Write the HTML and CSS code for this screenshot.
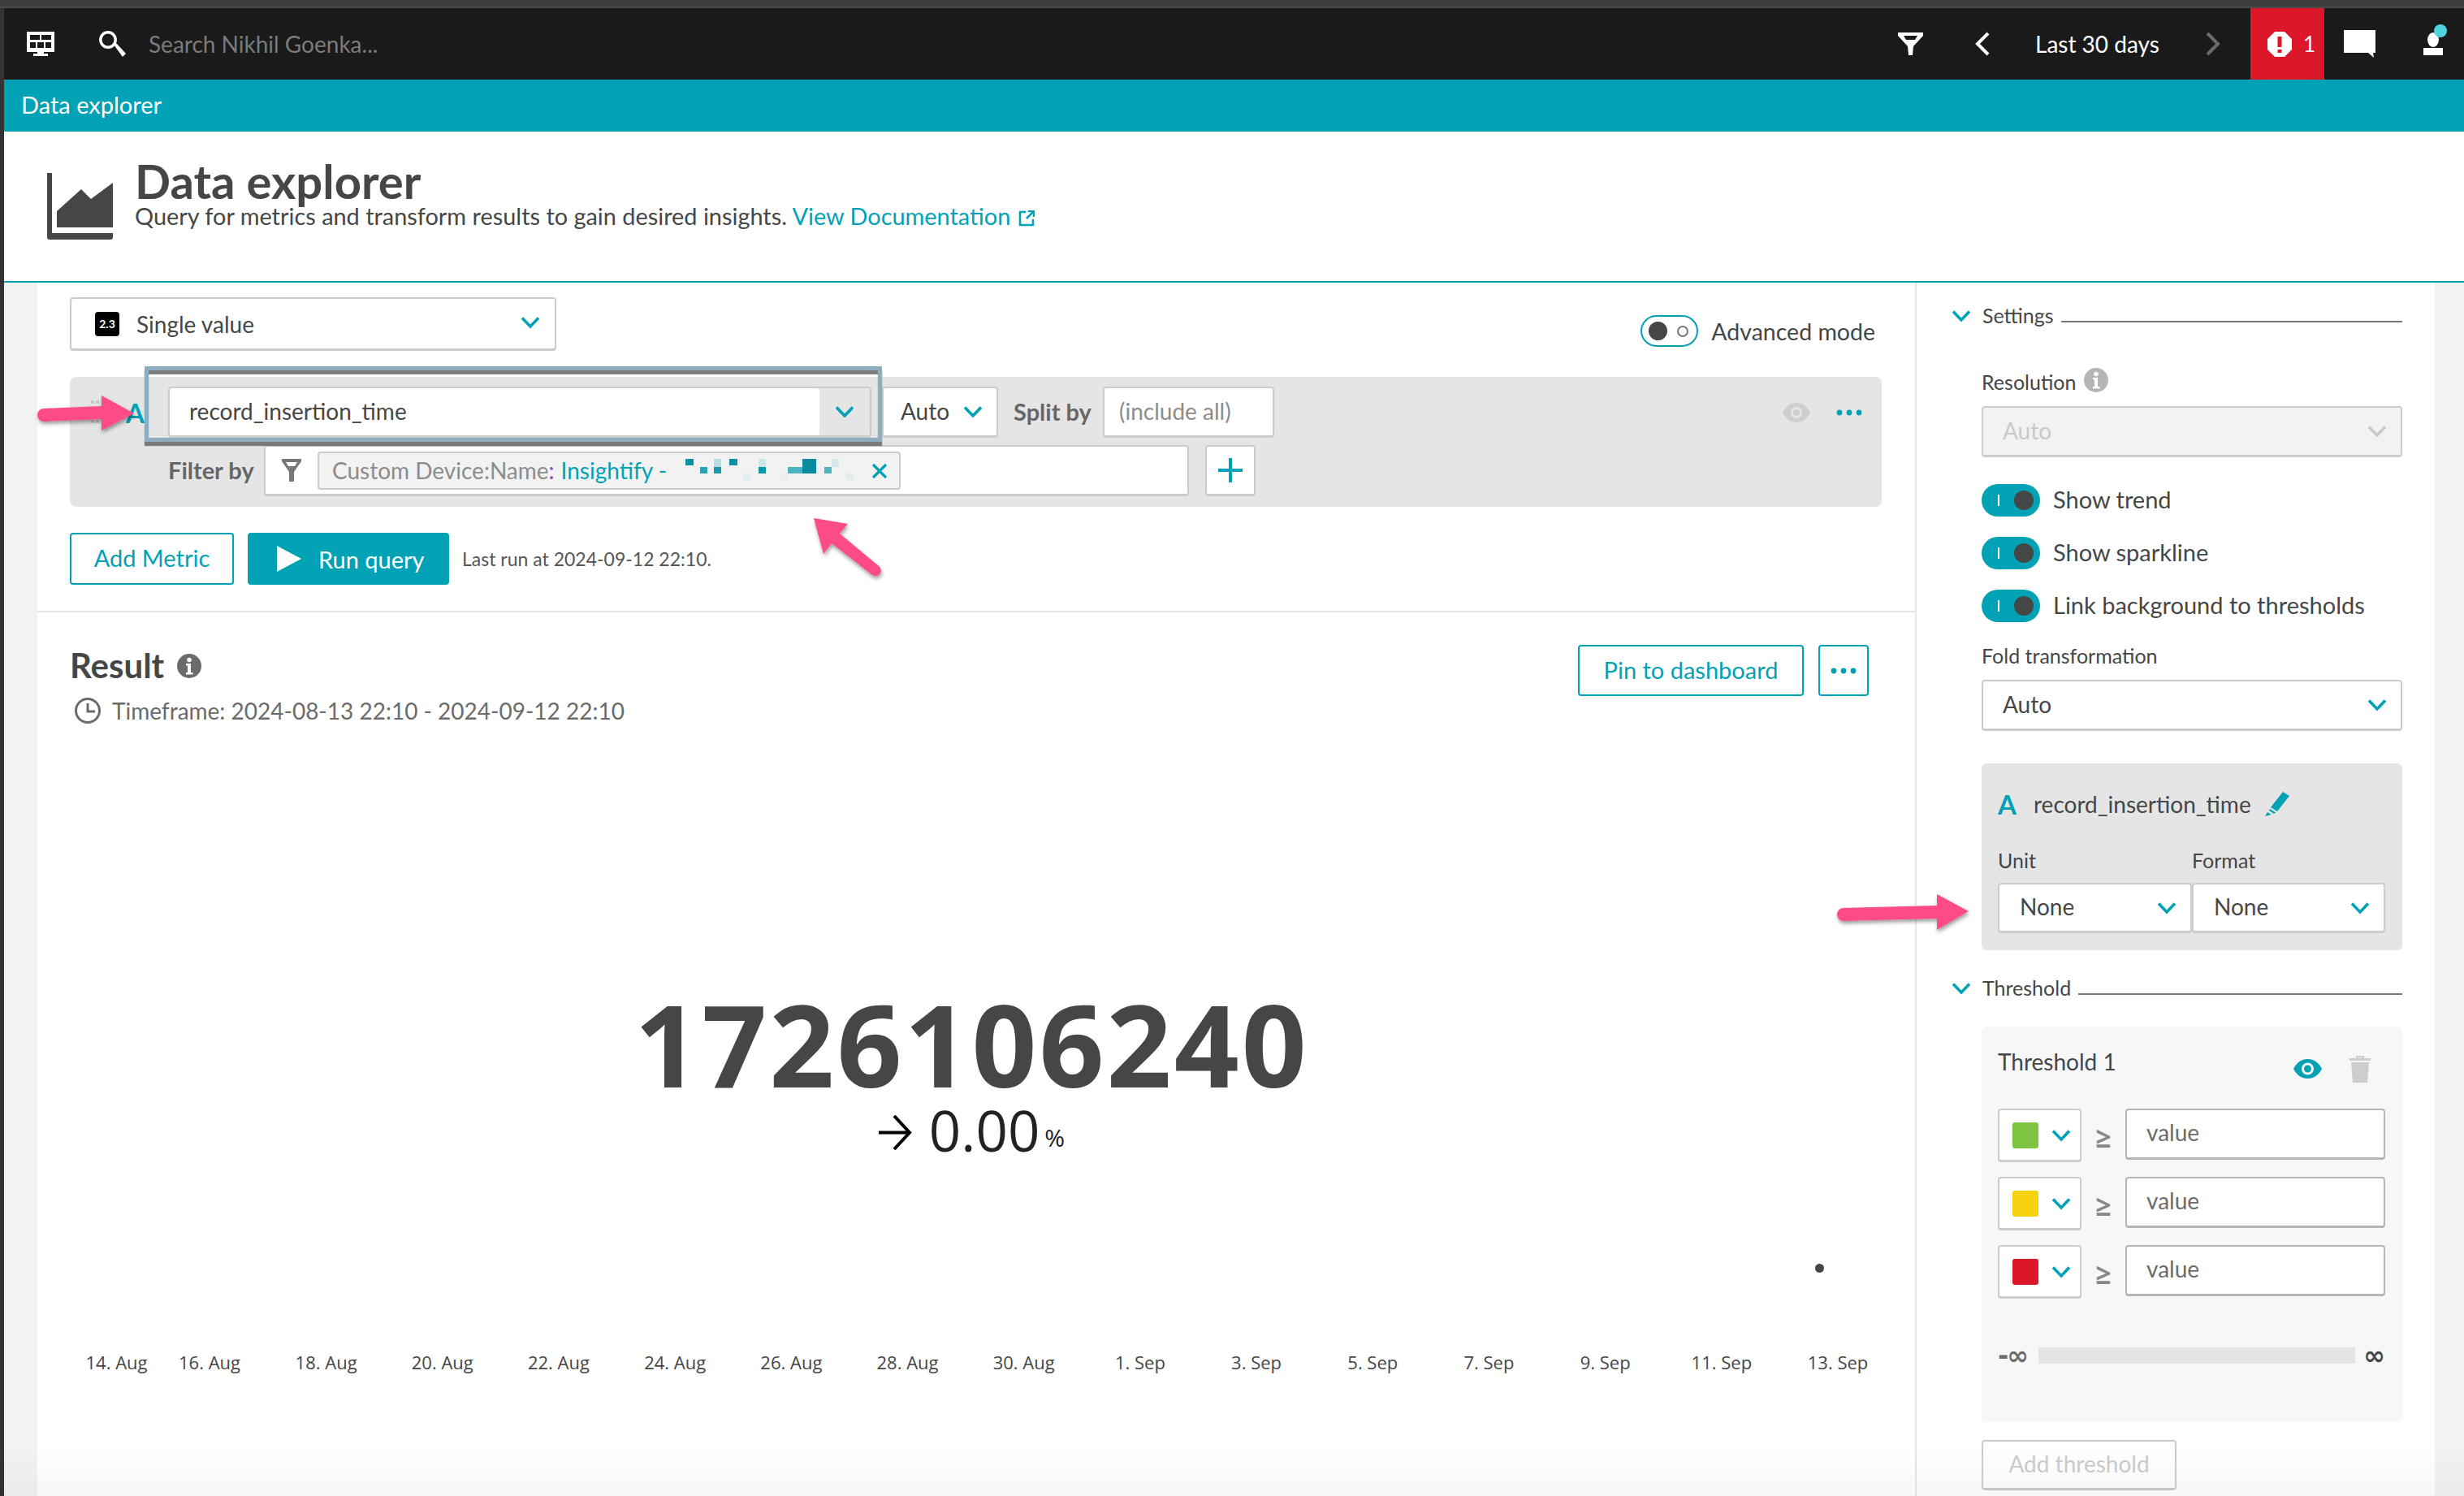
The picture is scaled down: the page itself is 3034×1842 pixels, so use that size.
FILE: index.html
```html
<!DOCTYPE html>
<html lang="en">
<head>
<meta charset="utf-8">
<title>Data explorer</title>
<link rel="stylesheet" href="styles.css">
</head>
<body>
<svg class="defs" aria-hidden="true">
  <symbol id="chev" viewBox="0 0 24 16"><path d="M2 2.500 12 13 22 2.500" fill="none" stroke="currentColor" stroke-width="3.600"/></symbol>
  <symbol id="dots" viewBox="0 0 32 8"><circle cx="4" cy="4" r="3.400" fill="currentColor"/><circle cx="16" cy="4" r="3.400" fill="currentColor"/><circle cx="28" cy="4" r="3.400" fill="currentColor"/></symbol>
  <symbol id="info" viewBox="0 0 30 30"><circle cx="15" cy="15" r="15" fill="currentColor"/><circle cx="15" cy="7.500" r="2.800" fill="#fff"/><path d="M11 12h6v11h2.500v2.500h-8.500V23H13v-8.500h-2z" fill="#fff"/></symbol>
</svg>
<div class="page">
  <div class="strip"></div>
  <div class="frame">
    <header class="topbar">
      <svg class="ic-monitor" viewBox="0 0 34 30"><path d="M0 0h34v25H21v2h5v3H8v-3h5v-2H0z" fill="#fff"/><path d="M4 4h12v6H4zM18 4h12v6H18zM4 13h7v7H4zM13 13h8v7h-8zM23 13h7v7h-7z" fill="#1a1a1a"/></svg>
      <svg class="ic-search" viewBox="0 0 34 32"><circle cx="11" cy="11" r="9.200" fill="none" stroke="#fff" stroke-width="3.400"/><path d="M18 17 21 15 33 28 29 32z" fill="#fff"/></svg>
      <span class="search-text">Search Nikhil Goenka...</span>
      <span class="grow"></span>
      <svg class="ic-funnel" viewBox="0 0 31 28"><path fill-rule="evenodd" d="M0 0h31v4L19 17l-1 11h-5l-1-11L0 4zM7 4l3 5h11l3-5z" fill="#fff"/></svg>
      <svg class="ic-nav ic-prev" viewBox="0 0 19 30"><path d="M17 2 4 15l13 13" fill="none" stroke="#fff" stroke-width="4"/></svg>
      <span class="range">Last 30 days</span>
      <svg class="ic-nav ic-next" viewBox="0 0 19 30"><path d="M2 2l13 13L2 28" fill="none" stroke="#6b6b6b" stroke-width="4"/></svg>
      <div class="alert">
        <svg class="ic-alert" viewBox="0 0 30 31"><path d="M9 0h12l9 9v13l-9 9H9l-9-9V9z" fill="#fff"/><path d="M12.500 6h5v13h-5zM12.500 22h5v4h-5z" fill="#dc172a"/></svg>
        <span>1</span>
      </div>
      <svg class="ic-comment" viewBox="0 0 39 34"><path d="M0 0h39v28h-3l1 6-7-6H0z" fill="#fff"/></svg>
      <svg class="ic-user" viewBox="0 0 32 38"><ellipse cx="14" cy="19" rx="7" ry="9" fill="#fff"/><path d="M2 29h24v13H2z" fill="#fff"/><circle cx="23" cy="8" r="8" fill="#4fd5e0"/></svg>
    </header>
    <div class="subbar">Data explorer</div>
    <section class="pagehead">
      <svg class="ic-chart" viewBox="0 0 81 82"><path d="M0 0h6v74h75v5a3 3 0 0 1-3 3H3a3 3 0 0 1-3-3z" fill="#454646"/><path d="M12 67V47l30-27 12 12L81 12v55z" fill="#454646"/></svg>
      <div class="pagehead-text">
        <h1>Data explorer</h1>
        <p>Query for metrics and transform results to gain desired insights. <a class="link">View Documentation</a><svg class="ic-ext" viewBox="0 0 20 20"><path d="M9 2H2v16h16v-7M12 1h7v7M19 1 10 10" fill="none" stroke="#02a2b6" stroke-width="2.500"/></svg></p>
      </div>
    </section>
    <div class="workspace">
      <div class="gutter"></div>
      <main class="main">
        <div class="row-type">
          <div class="box select select-type">
            <span class="type-badge">2.3</span>
            <span class="select-label">Single value</span>
            <svg class="chev"><use href="#chev"/></svg>
          </div>
          <div class="adv">
            <span class="adv-toggle"><i class="adv-knob"></i><i class="adv-ring"></i></span>
            <span>Advanced mode</span>
          </div>
        </div>

        <div class="query">
          <div class="query-row">
            <div class="grip"></div>
            <span class="letter">A</span>
            <div class="box metric">
              <span class="metric-value">record_insertion_time</span>
              <span class="metric-arrow"><svg class="chev"><use href="#chev"/></svg></span>
            </div>
            <div class="box select auto">
              <span>Auto</span>
              <svg class="chev"><use href="#chev"/></svg>
            </div>
            <span class="query-label split-label">Split by</span>
            <div class="box split"><span>(include all)</span></div>
            <span class="grow"></span>
            <svg class="ic-eye-off" viewBox="0 0 34 24"><path d="M0 12C4 4 10 0 17 0s13 4 17 12c-4 8-10 12-17 12S4 20 0 12z" fill="#cfcfcf"/><circle cx="17" cy="12" r="7" fill="#e5e5e5"/><circle cx="17" cy="12" r="4" fill="#cfcfcf"/></svg>
            <svg class="ic-dots"><use href="#dots"/></svg>
          </div>
          <div class="query-row filter-row">
            <span class="query-label filter-label">Filter by</span>
            <div class="box filter">
              <svg class="ic-filter" viewBox="0 0 24 28"><path fill-rule="evenodd" d="M0 0h24v3L15 16v12H9V16L0 3zM5 4l3 5h8l3-5z" fill="#777"/></svg>
              <div class="chip">
                <span class="chip-key">Custom Device:Name<b class="chip-colon">:</b></span>
                <span class="chip-val">Insightify -</span>
                <svg class="redact" viewBox="0 0 213 28">
                  <rect x="1" y="0" width="10" height="8" fill="#0d8fa3"/><rect x="19" y="10" width="9" height="8" fill="#2aa3b5"/><rect x="36" y="0" width="9" height="10" fill="#b5dde2"/><rect x="36" y="10" width="9" height="8" fill="#1b9aad"/><rect x="55" y="0" width="10" height="8" fill="#0d8fa3"/><rect x="72" y="18" width="9" height="8" fill="#dcecef"/><rect x="91" y="0" width="9" height="10" fill="#cfe6ea"/><rect x="91" y="10" width="9" height="8" fill="#0f95a9"/><rect x="118" y="18" width="9" height="8" fill="#e8eef0"/><rect x="127" y="10" width="18" height="8" fill="#4bb3c2"/><rect x="145" y="0" width="17" height="18" fill="#0b8ba0"/><rect x="172" y="10" width="9" height="8" fill="#4bb3c2"/><rect x="181" y="0" width="9" height="10" fill="#d5e8eb"/><rect x="199" y="18" width="9" height="8" fill="#e2ecee"/>
                </svg>
                <svg class="ic-x" viewBox="0 0 20 20"><path d="M2 2 18 18M18 2 2 18" stroke="#02a2b6" stroke-width="3.200"/></svg>
              </div>
            </div>
            <div class="box plus"><svg viewBox="0 0 30 30"><path d="M15 0v30M0 15h30" stroke="#02a2b6" stroke-width="4"/></svg></div>
          </div>
          <div class="focus-ring"></div>
        </div>

        <div class="actions">
          <button class="btn btn-outline btn-metric">Add Metric</button>
          <button class="btn btn-run"><svg viewBox="0 0 30 32"><path d="M0 0 30 16 0 32z" fill="#fff"/></svg>Run query</button>
          <span class="lastrun">Last run at 2024-09-12 22:10.</span>
        </div>

        <hr class="divider">

        <section class="result">
          <div class="result-head">
            <div>
              <h2>Result<svg class="ic-info-dark"><use href="#info"/></svg></h2>
              <div class="timeframe">
                <svg viewBox="0 0 32 32"><circle cx="16" cy="16" r="14.500" fill="none" stroke="#6b6b6b" stroke-width="3"/><path d="M16 7v10h9" fill="none" stroke="#6b6b6b" stroke-width="3"/></svg>
                <span>Timeframe: 2024-08-13 22:10 - 2024-09-12 22:10</span>
              </div>
            </div>
            <div class="result-actions">
              <button class="btn btn-outline btn-pin">Pin to dashboard</button>
              <button class="btn btn-outline btn-more"><svg class="ic-dots"><use href="#dots"/></svg></button>
            </div>
          </div>
          <div class="value">
            <div class="value-num">1726106240</div>
            <div class="value-trend">
              <svg viewBox="0 0 41 43"><path d="M0 21.500h36M19 1l19 20.500L19 42" fill="none" stroke="#000" stroke-width="4"/></svg>
              <span class="trend-num">0.00</span><span class="trend-pct">%</span>
            </div>
          </div>
          <i class="spark-dot"></i>
          <div class="ticks">
            <span>14. Aug</span><span>16. Aug</span><span>18. Aug</span><span>20. Aug</span><span>22. Aug</span><span>24. Aug</span><span>26. Aug</span><span>28. Aug</span><span>30. Aug</span><span>1. Sep</span><span>3. Sep</span><span>5. Sep</span><span>7. Sep</span><span>9. Sep</span><span>11. Sep</span><span>13. Sep</span>
          </div>
        </section>
      </main>

      <aside class="side">
        <div class="sec-head sec-settings"><svg class="chev"><use href="#chev"/></svg><span>Settings</span><i></i></div>
        <div class="field-label res-label">Resolution<svg class="ic-info"><use href="#info"/></svg></div>
        <div class="box select wide disabled"><span>Auto</span><svg class="chev"><use href="#chev"/></svg></div>
        <div class="toggles">
          <div class="toggle-row"><span class="toggle"><i class="toggle-bar"></i><i class="toggle-knob"></i></span><span class="toggle-text">Show trend</span></div>
          <div class="toggle-row"><span class="toggle"><i class="toggle-bar"></i><i class="toggle-knob"></i></span><span class="toggle-text">Show sparkline</span></div>
          <div class="toggle-row"><span class="toggle"><i class="toggle-bar"></i><i class="toggle-knob"></i></span><span class="toggle-text">Link background to thresholds</span></div>
        </div>
        <div class="field-label fold-label">Fold transformation</div>
        <div class="box select wide"><span>Auto</span><svg class="chev"><use href="#chev"/></svg></div>

        <div class="metric-panel">
          <div class="metric-title">
            <span class="letter">A</span>
            <span>record_insertion_time</span>
            <svg class="ic-pencil" viewBox="0 0 30 30"><path d="M22 0l8 5-15 19-8-5z" fill="#02a2b6"/><path d="M6 21l7 4.500-2 1.500-6-4zM3 25l5 3-8 2z" fill="#02a2b6"/></svg>
          </div>
          <div class="unit-grid">
            <div class="field-label">Unit</div>
            <div class="field-label">Format</div>
            <div class="box select"><span>None</span><svg class="chev"><use href="#chev"/></svg></div>
            <div class="box select"><span>None</span><svg class="chev"><use href="#chev"/></svg></div>
          </div>
        </div>

        <div class="sec-head sec-threshold"><svg class="chev"><use href="#chev"/></svg><span>Threshold</span><i></i></div>

        <div class="threshold">
          <div class="threshold-title">
            <span>Threshold 1</span>
            <span class="grow"></span>
            <svg class="ic-eye" viewBox="0 0 35 24"><path d="M0 12C4 4 10 0 17.500 0S31 4 35 12c-4 8-10 12-17.500 12S4 20 0 12z" fill="#02a2b6"/><circle cx="17.500" cy="12" r="7.500" fill="#f7f7f7"/><circle cx="17.500" cy="12" r="4.500" fill="#02a2b6"/></svg>
            <svg class="ic-trash" viewBox="0 0 26 34"><path d="M8 4V1h10v3h8v3H0V4zM10.500 4h5V3h-5zM2 9h22l-2 25H4z" fill="#cdcdcd"/></svg>
          </div>
          <div class="th-row">
            <div class="box th-color"><i class="swatch sw-green"></i><svg class="chev"><use href="#chev"/></svg></div>
            <span class="gte">≥</span>
            <div class="box th-input">value</div>
          </div>
          <div class="th-row">
            <div class="box th-color"><i class="swatch sw-yellow"></i><svg class="chev"><use href="#chev"/></svg></div>
            <span class="gte">≥</span>
            <div class="box th-input">value</div>
          </div>
          <div class="th-row">
            <div class="box th-color"><i class="swatch sw-red"></i><svg class="chev"><use href="#chev"/></svg></div>
            <span class="gte">≥</span>
            <div class="box th-input">value</div>
          </div>
          <div class="range-row">
            <span class="inf inf-neg">-∞</span>
            <i class="range-bar"></i>
            <span class="inf">∞</span>
          </div>
        </div>
        <button class="btn add-threshold">Add threshold</button>
      </aside>
      <div class="gutter-right"></div>
    </div>
  </div>
  <div class="fade"></div>
  <svg class="arrows" viewBox="0 0 3034 1842" aria-hidden="true">
    <defs><filter id="sh" x="-20%" y="-20%" width="140%" height="140%"><feDropShadow dx="1" dy="3" stdDeviation="2.500" flood-color="#000" flood-opacity=".4"/></filter></defs>
    <path filter="url(#sh)" fill="#fc4c87" d="M54 503 125 500 125 487 165 509 125 530 125 516 54 519a8 8 0 0 1 0-16z"/>
    <path filter="url(#sh)" fill="#fc4c87" d="M1002 638 1044 645 1034 657 1082 697a6 6 0 0 1-8 11L1024 669 1014 682z"/>
    <path filter="url(#sh)" fill="#fc4c87" d="M2270 1118 2385 1115 2385 1101 2424 1122 2385 1145 2385 1131 2270 1134a8 8 0 0 1 0-16z"/>
  </svg>
</div>
</body>
</html>
```
FILE: styles.css
```css
* { box-sizing: border-box; }
html, body { margin: 0; padding: 0; }
body {
  font-family: "Lato", "Open Sans", sans-serif;
  font-size: 29px;
  color: #454646;
  background: #fff;
}
.defs { position: absolute; width: 0; height: 0; }
.grow { flex: 1; }
.page { position: relative; width: 3034px; height: 1842px; overflow: hidden; }
.strip { height: 10px; background: linear-gradient(#3c3c3c 80%, #4a4a4a 80%); }
.frame { height: 1832px; border-left: 5px solid #333; display: flex; flex-direction: column; }

/* top bar */
.topbar { height: 88px; background: #1a1a1a; display: flex; align-items: center; flex: none; font-size: 28px; }
.ic-monitor { width: 34px; height: 30px; margin-left: 28px; flex: none; }
.ic-search { width: 34px; height: 32px; margin-left: 55px; flex: none; }
.search-text { margin-left: 27px; color: #7b7b7b; }
.ic-funnel { width: 31px; height: 28px; flex: none; }
.ic-nav { width: 19px; height: 30px; flex: none; }
.ic-prev { margin-left: 63px; }
.range { margin-left: 56px; width: 210px; color: #fff; }
.alert { width: 91px; height: 88px; margin-left: 36px; background: #dc172a; color: #fff; display: flex; align-items: center; padding-left: 21px; gap: 14px; font-size: 26px; flex: none; }
.ic-alert { width: 30px; height: 31px; }
.ic-comment { width: 39px; height: 34px; margin-left: 24px; flex: none; }
.ic-user { width: 32px; height: 38px; margin: -10px 20px 0 57px; flex: none; }

.subbar { height: 64px; flex: none; background: #02a2b6; color: #fff; padding-left: 21px; line-height: 62px; }

/* page head */
.pagehead { height: 186px; flex: none; border-bottom: 2px solid #02a2b6; display: flex; padding: 35px 0 0 53px; }
.ic-chart { width: 81px; height: 82px; margin-top: 16px; flex: none; }
.pagehead-text { margin-left: 27px; }
h1 { margin: 0; font-size: 58px; font-weight: 700; line-height: 52px; color: #454646; }
.pagehead p { margin: 0; line-height: 34px; white-space: nowrap; font-size: 28.9px; }
.link { color: #02a2b6; }
.ic-ext { width: 20px; height: 20px; margin-left: 10px; vertical-align: -2px; }

/* workspace */
.workspace { flex: 1; display: flex; min-height: 0; }
.gutter { width: 41px; flex: none; background: #f2f2f2; }
.gutter-right { width: 36px; flex: none; background: #f2f2f2; }
.main { width: 2314px; flex: none; border-right: 2px solid #e6e6e6; padding: 18px 41px 0 40px; }
.side { width: 638px; flex: none; padding: 26px 40px 0 80px; }

/* generic controls */
.box { background: #fff; border: 2px solid #ccc; border-bottom-width: 3px; border-radius: 4px; font-size: 28px; }
.select { display: flex; align-items: center; justify-content: space-between; height: 63px; padding: 0 17px 3px 24px; }
.chev { width: 24px; height: 16px; color: #02a2b6; flex: none; }
.select .chev { margin-top: 3px; }
.btn { font: inherit; background: #fff; border-radius: 4px; padding: 0 0 3px; }
.btn-outline { border: 2px solid #02a2b6; color: #02a2b6; display: inline-flex; align-items: center; justify-content: center; }

/* type row */
.row-type { display: flex; justify-content: space-between; align-items: center; height: 66px; padding-right: 8px; }
.select-type { width: 599px; height: 66px; padding: 0 18px 0 29px; justify-content: flex-start; }
.select-type .chev { margin-left: auto; margin-top: -4px; }
.type-badge { width: 30px; height: 30px; border-radius: 4px; background: #000; color: #fff; font-size: 14px; font-weight: 700; text-align: center; line-height: 30px; }
.select-label { margin-left: 21px; }
.adv { display: flex; align-items: center; gap: 16px; margin-top: 17px; font-size: 28.5px; }
.adv-toggle { width: 71px; height: 39px; border: 2px solid #02a2b6; border-radius: 20px; display: flex; align-items: center; justify-content: space-between; padding: 0 10px 0 8px; }
.adv-knob { width: 23px; height: 23px; background: #454646; border-radius: 50%; }
.adv-ring { width: 14px; height: 14px; border: 2px solid #777; border-radius: 50%; }

/* query */
.query { position: relative; margin-top: 32px; height: 160px; background: #e5e5e5; border-radius: 8px; padding: 12px 24px 0 0; }
.query-row { display: flex; align-items: center; height: 63px; }
.grip { width: 12px; height: 34px; margin-left: 25px; background-image: radial-gradient(circle, #c4c4c4 2px, transparent 2.500px); background-size: 6px 8px; }
.letter { color: #02a2b6; font-size: 33px; font-weight: 700; }
.query-row .letter { margin-left: 32px; width: 52px; }
.metric { width: 866px; height: 63px; display: flex; background: #e5e5e5; }
.metric-value { width: 800px; background: #fff; padding-left: 24px; line-height: 57px; border-radius: 3px; }
.metric-arrow { flex: 1; display: flex; align-items: center; justify-content: center; }
.auto { width: 143px; margin-left: 13px; padding: 0 17px 3px 21px; }
.query-label { font-weight: 700; color: #666; }
.split-label { margin-left: 19px; width: 110px; padding-bottom: 3px; }
.split { width: 211px; height: 63px; color: #8c8c8c; padding-left: 18px; line-height: 57px; }
.ic-eye-off { width: 34px; height: 24px; }
.ic-dots { width: 32px; height: 8px; color: #02a2b6; }
.query-row .ic-dots { margin-left: 32px; }
.filter-row { margin-top: 9px; padding-left: 121px; }
.filter-label { width: 118px; padding-bottom: 3px; }
.filter { width: 1139px; height: 63px; display: flex; align-items: center; padding-left: 20px; }
.ic-filter { width: 24px; height: 28px; flex: none; }
.chip { margin-left: 20px; width: 718px; height: 47px; background: #f2f2f2; border: 2px solid #ccc; border-radius: 4px; display: flex; align-items: center; padding: 0 0 0 16px; position: relative; }
.chip-key { color: #8c8c8c; }
.chip-colon { font-weight: 400; color: #8e44ad; }
.chip-val { color: #02a2b6; margin-left: 8px; white-space: nowrap; }
.redact { width: 213px; height: 28px; margin-left: 22px; flex: none; }
.ic-x { width: 20px; height: 20px; position: absolute; right: 14px; top: 12px; }
.plus { width: 62px; height: 63px; margin-left: 20px; display: flex; align-items: center; justify-content: center; }
.plus svg { width: 30px; height: 30px; }
.focus-ring { position: absolute; left: 92px; top: -13px; width: 908px; height: 93px; border: 5px solid #8fadc0; box-shadow: inset 0 5px 1px #7b7b7b, 0 5px 1px #7b7b7b; pointer-events: none; }

/* actions */
.actions { display: flex; align-items: center; margin-top: 32px; height: 64px; }
.btn-metric { width: 202px; height: 64px; }
.btn-run { width: 248px; height: 64px; margin-left: 17px; background: #02a2b6; border: 0; color: #fff; display: inline-flex; align-items: center; gap: 21px; padding: 0 0 0 36px; }
.btn-run svg { width: 30px; height: 32px; }
.lastrun { margin-left: 16px; font-size: 23px; color: #555; }

.divider { margin: 32px -41px 0 -40px; border: 0; border-top: 2px solid #e6e6e6; }

/* result */
.result { position: relative; padding-top: 40px; }
.result-head { display: flex; justify-content: space-between; }
h2 { margin: 0; font-size: 42px; font-weight: 700; line-height: 52px; display: flex; align-items: center; padding-bottom: 2px; height: 52px; }
.ic-info-dark { width: 30px; height: 30px; color: #6b6b6b; margin-left: 16px; margin-top: 2px; }
.timeframe { display: flex; align-items: center; margin-top: 9px; line-height: 40px; color: #6b6b6b; padding-left: 6px; font-size: 28px; }
.timeframe svg { width: 32px; height: 32px; margin-right: 14px; }
.result-actions { display: flex; gap: 18px; padding-right: 16px; }
.btn-pin { width: 278px; height: 63px; }
.btn-more { width: 62px; height: 63px; padding: 0; }
.value { margin-top: 320px; text-align: center; font-family: "Open Sans", sans-serif; padding-right: 10px; }
.value-num { font-size: 140px; font-weight: 700; line-height: 140px; letter-spacing: 3px; }
.value-trend { display: flex; justify-content: center; align-items: flex-end; height: 60px; margin-top: 6px; color: #222; }
.value-trend svg { width: 41px; height: 43px; margin: 0 21px 5px 0; }
.trend-num { font-size: 69px; line-height: 60px; }
.trend-pct { font-size: 30px; line-height: 40px; margin-left: 6px; }
.spark-dot { position: absolute; left: 2149px; top: 802px; width: 11px; height: 11px; border-radius: 50%; background: #454646; }
.ticks { display: flex; position: absolute; left: -40px; top: 908px; font-family: "Open Sans", sans-serif; font-size: 22px; white-space: nowrap; }
.ticks span { width: 143.2px; text-align: center; flex: none; }
.ticks span:first-child { width: 115px; margin-left: 40px; }
.ticks span:nth-child(2) { width: 114px; margin-right: 15px; }

/* side */
.sec-head { display: flex; align-items: center; height: 30px; font-size: 25px; margin-left: -37px; }
.sec-head .chev { margin-right: 14px; }
.sec-head span { padding-bottom: 3px; }
.sec-settings i, .sec-threshold i { flex: 1; height: 2px; background: #777; margin: 14px 0 0 9px; }
.field-label { font-size: 25px; line-height: 30px; }
.res-label { margin-top: 51px; display: flex; align-items: center; }
.ic-info { width: 30px; height: 30px; color: #b5b5b5; margin-left: 10px; margin-top: -4px; }
.wide { margin-top: 15px; }
.disabled { background: #f2f2f2; color: #c9c9c9; }
.disabled .chev { color: #c9c9c9; }
.toggles { margin-top: 33px; display: flex; flex-direction: column; gap: 25px; }
.toggle-row { display: flex; align-items: center; height: 40px; gap: 16px; }
.toggle-text { padding-bottom: 3px; }
.toggle { position: relative; width: 72px; height: 40px; background: #02a2b6; border-radius: 20px; display: block; flex: none; }
.toggle-bar { position: absolute; left: 20px; top: 13px; width: 2px; height: 14px; background: #fff; }
.toggle-knob { position: absolute; left: 40px; top: 8px; width: 24px; height: 24px; border-radius: 50%; background: #454646; }
.fold-label { margin-top: 26px; }
.metric-panel { margin-top: 40px; height: 230px; background: #e5e5e5; border-radius: 6px; padding: 30px 21px 0 20px; font-size: 28px; }
.metric-title { display: flex; align-items: center; height: 40px; }
.metric-title .letter { width: 44px; }
.ic-pencil { width: 30px; height: 30px; margin-left: 17px; }
.unit-grid { display: grid; grid-template-columns: 239px 238px; margin-top: 34px; row-gap: 13px; }
.unit-grid .select { height: 62px; padding-left: 25px; }
.sec-threshold { margin-top: 32px; }
.threshold { margin-top: 32px; height: 487px; background: #f7f7f7; border-radius: 6px; padding: 23px 21px 0 20px; font-size: 28px; }
.threshold-title { display: flex; align-items: center; height: 40px; }
.threshold-title svg { margin-top: 18px; }
.ic-eye { width: 35px; height: 24px; }
.ic-trash { width: 26px; height: 34px; margin-left: 34px; margin-right: 18px; }
.th-row { display: flex; align-items: flex-start; height: 66px; margin-top: 18px; }
.threshold-title + .th-row { margin-top: 38px; }
.th-color { width: 103px; height: 66px; display: flex; align-items: center; padding-left: 16px; gap: 16px; }
.swatch { width: 32px; height: 32px; border-radius: 3px; }
.sw-green { background: #7dc540; }
.sw-yellow { background: #f5d30f; }
.sw-red { background: #dc172a; }
.gte { width: 54px; text-align: center; font-size: 34px; font-weight: 700; color: #888; line-height: 70px; font-family: "Open Sans", sans-serif; }
.th-input { width: 320px; height: 63px; line-height: 54px; padding-left: 24px; color: #6b6b6b; border-color: #b5b5b5; }
.range-row { display: flex; align-items: center; height: 30px; margin-top: 55px; gap: 10px; font-family: "DejaVu Sans", sans-serif; font-weight: 700; }
.inf { font-size: 32px; line-height: 30px; }
.inf-neg { width: 40px; color: #6b6b6b; white-space: nowrap; letter-spacing: -2px; }
.range-bar { width: 392px; height: 20px; background: #e5e5e5; }
.add-threshold { margin-top: 22px; width: 240px; height: 62px; border: 2px solid #ccc; border-bottom-width: 3px; color: #ccc; font-size: 28px; padding-bottom: 3px; }

.fade { position: absolute; left: 0; right: 0; bottom: 0; height: 60px; background: linear-gradient(rgba(0,0,0,0), rgba(0,0,0,.03)); pointer-events: none; }
.arrows { position: absolute; left: 0; top: 0; width: 3034px; height: 1842px; pointer-events: none; }
```
